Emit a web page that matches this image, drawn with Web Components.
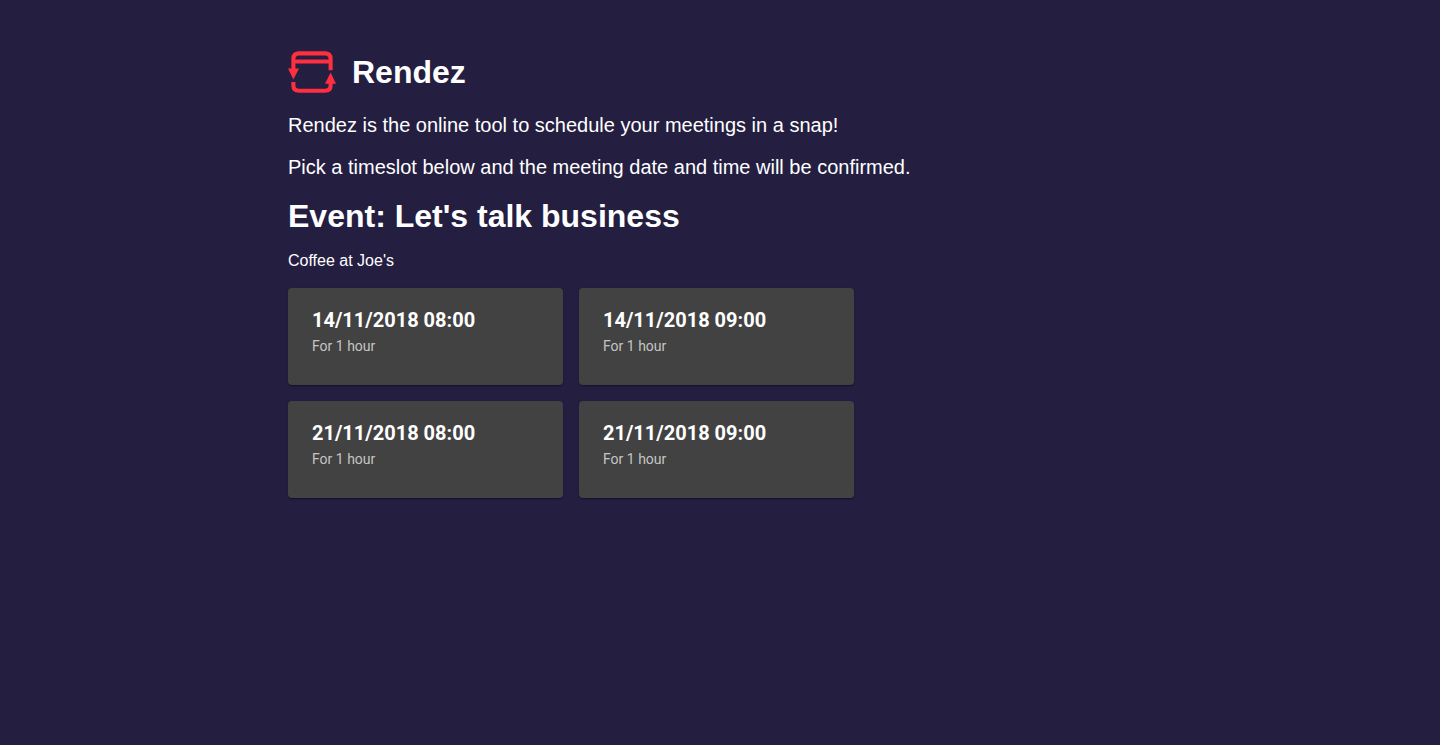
<!DOCTYPE html>
<html lang="en">
<head>
<meta charset="utf-8">
<meta name="viewport" content="width=device-width, initial-scale=1">
<title>Rendez</title>
<style>
    body {
        margin: 0;
        background-color: #241e41;
        color: #fff;
        font-family: "Liberation Sans", Arial, sans-serif;
    }
</style>
</head>
<body>
<rendez-app></rendez-app>

<script>
class RendezLogoElement extends HTMLElement {
    constructor() {
        super();
        this.attachShadow({mode : "open"});

        this.shadowRoot.innerHTML = `
            <style>
                :host {
                    display: block;
                    flex: none;
                    width: 48px;
                    height: 48px;
                    color: #ff2f40;
                }
                svg {
                    display: block;
                    width: 100%;
                    height: 100%;
                }
            </style>

            <svg viewBox="0 0 48 48" aria-hidden="true">
                <g fill="none" stroke="currentColor" stroke-width="4.1">
                    <path d="M5.4 21V11Q5.4 5.4 11 5.4H37Q42.6 5.4 42.6 11V22.3"/>
                    <path d="M5.4 13.5H42.6"/>
                    <path d="M5.4 34V37.5Q5.4 42.7 11 42.7H37Q42.6 42.7 42.6 37.5V35"/>
                </g>
                <path fill="currentColor" d="M0 20.6H11L5.4 31.6ZM37 35.8H48L42.6 24.5Z"/>
            </svg>
        `;
    }
}
customElements.define("rendez-logo", RendezLogoElement);

class RendezHeaderElement extends HTMLElement {
    constructor() {
        super();
        this.attachShadow({mode : "open"});

        this.shadowRoot.innerHTML = `
            <style>
                :host {
                    display: block;
                }
                header {
                    display: flex;
                    align-items: center;
                    gap: 16px;
                }
                h1 {
                    margin: 0;
                    font-size: 32px;
                    line-height: 40px;
                }
            </style>

            <header>
                <rendez-logo></rendez-logo>
                <h1><slot></slot></h1>
            </header>
        `;
    }
}
customElements.define("rendez-header", RendezHeaderElement);

class RendezEventElement extends HTMLElement {
    constructor() {
        super();
        this.attachShadow({mode : "open"});

        this.shadowRoot.innerHTML = `
            <style>
                :host {
                    display: block;
                }
                h1 {
                    margin: 0 0 16px;
                    font-size: 32px;
                    line-height: 40px;
                }
                p {
                    margin: 0 0 18px;
                    font-size: 16px;
                    line-height: 18px;
                }
                .timeslots {
                    display: grid;
                    grid-template-columns: repeat(2, minmax(0, 275px));
                    gap: 16px;
                }
                @media (max-width: 600px) {
                    .timeslots {
                        grid-template-columns: 1fr;
                    }
                }
            </style>

            <h1>Event: <slot name="title"></slot></h1>
            <p><slot name="description"></slot></p>
            <div class="timeslots"><slot></slot></div>
        `;
    }
}
customElements.define("rendez-event", RendezEventElement);

class RendezTimeslotElement extends HTMLElement {
    constructor() {
        super();
        this.attachShadow({mode : "open"});

        this.shadowRoot.innerHTML = `
            <style>
                :host {
                    display: block;
                    font-family: Roboto, sans-serif;
                }
                button {
                    display: block;
                    width: 100%;
                    margin: 0;
                    padding: 16px 24px 29px;
                    border: 0;
                    border-radius: 4px;
                    background-color: #424242;
                    box-shadow: 0 2px 1px -1px rgba(0, 0, 0, 0.2), 0 1px 1px 0 rgba(0, 0, 0, 0.14), 0 1px 3px 0 rgba(0, 0, 0, 0.12);
                    color: #fff;
                    font-family: inherit;
                    text-align: left;
                    cursor: pointer;
                }
                .date, .duration {
                    display: block;
                }
                .date {
                    font-size: 20px;
                    font-weight: 700;
                    line-height: 32px;
                }
                .duration {
                    color: rgba(255, 255, 255, 0.7);
                    font-size: 14px;
                    line-height: 20px;
                }
            </style>

            <button type="button">
                <span class="date"><slot></slot></span>
                <span class="duration"></span>
            </button>
        `;

        this.button = this.shadowRoot.querySelector(`button`);
        this.button.addEventListener("click", event => {
            this.dispatchEvent(new CustomEvent("pick", {bubbles : true, composed : true}));
        });
    }

    static get observedAttributes() {
        return ["duration"];
    }

    attributeChangedCallback(attributeName, oldValue, newValue) {
        this.shadowRoot.querySelector(`.duration`).textContent = `For ${newValue}`;
    }
}
customElements.define("rendez-timeslot", RendezTimeslotElement);

class RendezAppElement extends HTMLElement {
    constructor() {
        super();
        this.attachShadow({mode : "open"});

        this.shadowRoot.innerHTML = `
            <style>
                :host {
                    display: block;
                }
                main {
                    width: 60%;
                    margin: 0 auto;
                    padding: 48px 0;
                }
                p {
                    margin: 16px 0;
                    font-size: 20px;
                    line-height: 26px;
                }
                @media (max-width: 600px) {
                    main {
                        width: 90%;
                    }
                }
            </style>

            <main>
                <rendez-header>Rendez</rendez-header>
                <p>Rendez is the online tool to schedule your meetings in a snap!</p>
                <p>Pick a timeslot below and the meeting date and time will be confirmed.</p>
                <rendez-event>
                    <span slot="title">Let's talk business</span>
                    <span slot="description">Coffee at Joe's</span>
                    <rendez-timeslot duration="1 hour">14/11/2018 08:00</rendez-timeslot>
                    <rendez-timeslot duration="1 hour">14/11/2018 09:00</rendez-timeslot>
                    <rendez-timeslot duration="1 hour">21/11/2018 08:00</rendez-timeslot>
                    <rendez-timeslot duration="1 hour">21/11/2018 09:00</rendez-timeslot>
                </rendez-event>
            </main>
        `;
    }
}
customElements.define("rendez-app", RendezAppElement);
</script>
</body>
</html>
